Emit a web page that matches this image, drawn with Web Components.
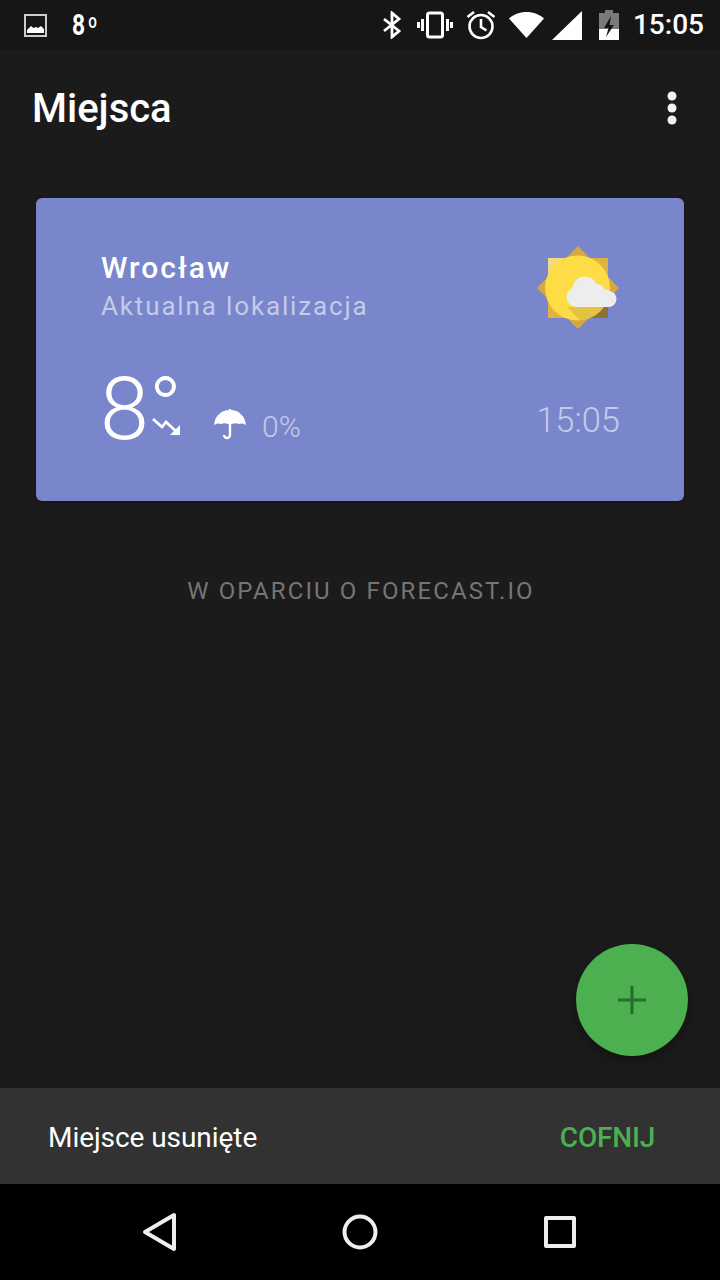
<!DOCTYPE html>
<html>

<head>
    <meta charset="utf-8">
    <title>Miejsca</title>
    <style>
        html, body { margin: 0; padding: 0; }
        body { width: 720px; height: 1280px; overflow: hidden; background: #1b1b1b; font-family: Roboto, "Liberation Sans", sans-serif; }
    </style>
</head>

<body>
    <app-screen>
        <status-bar slot="top" time="15:05"></status-bar>
        <app-toolbar slot="top">Miejsca</app-toolbar>
        <place-card city="Wrocław" note="Aktualna lokalizacja" temp="8°" rain="0%" time="15:05"></place-card>
        <credit-line>W OPARCIU O FORECAST.IO</credit-line>
        <add-fab slot="fab"></add-fab>
        <snack-bar slot="bottom" action="COFNIJ">Miejsce usunięte</snack-bar>
        <nav-bar slot="bottom"></nav-bar>
    </app-screen>
</body>
<script>
    class AppScreen extends HTMLElement {
        constructor() {
            super();
            const shadow = this.attachShadow({ mode: 'open' });
            shadow.innerHTML = `
            <style>
                :host { display: flex; flex-direction: column; position: relative; width: 720px; height: 1280px; color: #fff; }
                main { flex: 1; display: flex; flex-direction: column; padding: 32px 36px 0; }
                .fab { position: absolute; left: 576px; top: 944px; }
            </style>
            <slot name="top"></slot>
            <main><slot></slot></main>
            <div class="fab"><slot name="fab"></slot></div>
            <slot name="bottom"></slot>
            `;
        }
    }
    customElements.define('app-screen', AppScreen);

    class StatusBar extends HTMLElement {
        constructor() {
            super();
            const shadow = this.attachShadow({ mode: 'open' });
            shadow.innerHTML = `
            <style>
                :host { display: flex; align-items: center; height: 50px; background: #161616; color: #fff; box-sizing: border-box; padding: 0 16px 0 24px; }
                svg { display: block; flex: none; }
                .temp { margin-left: 25px; width: 30px; font: 700 30px/50px Roboto, sans-serif; transform: scaleX(.76); transform-origin: left center; }
                .temp sup { font-size: 20px; font-weight: 500; line-height: 0; vertical-align: 7px; margin-left: 4px; }
                .icons { margin-left: auto; display: flex; align-items: center; }
                .time { margin-left: 14px; font: 500 28px/50px Roboto, sans-serif; }
            </style>
            <svg width="23" height="23" viewBox="0 0 23 23">
                <rect x="1" y="1" width="21" height="21" fill="none" stroke="#ccc" stroke-width="2"/>
                <path d="M3 19v-3l4-4 2.500 2 2.500-1 2 1 3-2 3 3v4z" fill="#fff"/>
            </svg>
            <div class="temp">8<sup>o</sup></div>
            <div class="icons">
                <svg width="20" height="28" viewBox="0 0 20 28" fill="none" stroke="#fff" stroke-width="2.800">
                    <path d="M2 8l15 12-7 6V2l7 6L2 20"/>
                </svg>
                <svg style="margin-left:15px" width="36" height="28" viewBox="1 0 36 28" fill="none" stroke="#fff">
                    <rect x="11.500" y="2" width="15" height="24" rx="2" stroke-width="3"/>
                    <path d="M6.500 8v12M2.500 11v6M31.500 8v12M35.500 11v6" stroke-width="3"/>
                </svg>
                <svg style="margin-left:12px" width="32" height="30" viewBox="0 0 32 30" fill="none" stroke="#fff" stroke-width="2.600">
                    <circle cx="16" cy="16.500" r="11.500"/>
                    <path d="M16 9v8l5.500 3.500"/>
                    <path d="M2.500 7L9 2M29.500 7L23 2" stroke-width="2.600"/>
                </svg>
                <svg style="margin-left:11px" width="37" height="28" viewBox="0 0 37 28">
                    <path d="M18.500 27L1 7.500C5.500 3.500 11.500 1 18.500 1S31.500 3.500 36 7.500z" fill="#fff"/>
                </svg>
                <svg style="margin-left:7px" width="31" height="29" viewBox="0 0 31 29">
                    <path d="M30 0v29H0z" fill="#fff"/>
                </svg>
                <svg style="margin-left:16px" width="20" height="30" viewBox="0 0 20 30">
                    <path d="M6 0h8v3h6v27H0V3h6z" fill="#7a7a7a"/>
                    <path d="M0 19h20v11H0z" fill="#fff"/>
                    <path d="M12 6L5 18h4.500L7 27l8-12h-4.500z" fill="#161616"/>
                </svg>
            </div>
            <div class="time">${this.getAttribute('time')}</div>
            `;
        }
    }
    customElements.define('status-bar', StatusBar);

    class AppToolbar extends HTMLElement {
        constructor() {
            super();
            const shadow = this.attachShadow({ mode: 'open' });
            shadow.innerHTML = `
            <style>
                :host { display: flex; align-items: center; justify-content: space-between; box-sizing: border-box; height: 116px; padding: 2px 43px 0 32px; font: 500 40px/114px Roboto, sans-serif; color: #fff; }
                svg { display: block; margin-bottom: 2px; }
            </style>
            <slot></slot>
            <svg width="10" height="34" viewBox="0 0 10 34" fill="#f2f2f2">
                <circle cx="5" cy="5" r="4.500"/>
                <circle cx="5" cy="17" r="4.500"/>
                <circle cx="5" cy="29" r="4.500"/>
            </svg>
            `;
        }
    }
    customElements.define('app-toolbar', AppToolbar);

    class WeatherIcon extends HTMLElement {
        constructor() {
            super();
            const shadow = this.attachShadow({ mode: 'open' });
            shadow.innerHTML = `
            <style>
                :host { display: block; width: 90px; height: 90px; }
                svg { display: block; }
            </style>
            <svg width="90" height="90" viewBox="534 243 90 90">
                <clipPath id="disc"><circle cx="577.500" cy="288" r="32.500"/></clipPath>
                <path d="M578 246l41 42-41 41-41-41z" fill="#d8a83c"/>
                <rect x="548" y="258" width="60" height="60" fill="#e1b23f"/>
                <path d="M548 258h30l-30 30z" fill="#f2dc80"/>
                <path d="M608 318h-30l30-30z" fill="#8b7238"/>
                <circle cx="577.500" cy="288" r="32.500" fill="#fddc45"/>
                <path d="M567 307h50v23h-27z" fill="#e2c23e" clip-path="url(#disc)"/>
                <g fill="#ededed">
                    <circle cx="576.500" cy="297" r="10"/>
                    <circle cx="585" cy="289" r="12.500"/>
                    <circle cx="597" cy="292" r="8"/>
                    <circle cx="608.500" cy="299" r="8"/>
                    <rect x="576" y="290" width="33" height="17"/>
                </g>
            </svg>
            `;
        }
    }
    customElements.define('weather-icon', WeatherIcon);

    class PlaceCard extends HTMLElement {
        constructor() {
            super();
            const shadow = this.attachShadow({ mode: 'open' });
            shadow.innerHTML = `
            <style>
                :host { display: flex; flex-direction: column; justify-content: space-between; box-sizing: border-box; height: 303px; padding: 50px 64px 61px 65px; background: #7986cb; border-radius: 6px; color: #fff; box-shadow: 0 1px 3px rgba(0,0,0,.35); }
                .row { display: flex; justify-content: space-between; }
                .top { align-items: flex-start; height: 88px; }
                .bottom { align-items: flex-end; }
                .city { font: 500 30px/39px Roboto, sans-serif; letter-spacing: 2px; }
                .note { font: 400 26px/38px Roboto, sans-serif; letter-spacing: 1.850px; color: #c4cae8; }
                .now { display: flex; align-items: flex-end; }
                .temp { font: 300 88px/76px Roboto, sans-serif; margin: 0 0 -7px -1px; }
                .trend { display: block; margin: 0 0 5px -30px; }
                .brolly { display: block; margin: 0 0 0 34px; }
                .rain { font: 300 30px/36px Roboto, sans-serif; color: #c4cae8; margin: 0 0 -5px 16px; }
                .time { font: 300 34.500px/40px Roboto, sans-serif; color: #c4cae8; margin-bottom: 0; }
                weather-icon { margin: -5px -4px 0 0; }
            </style>
            <div class="row top">
                <div>
                    <div class="city">${this.getAttribute('city')}</div>
                    <div class="note">${this.getAttribute('note')}</div>
                </div>
                <weather-icon></weather-icon>
            </div>
            <div class="row bottom">
                <div class="now">
                    <div class="temp">${this.getAttribute('temp')}</div>
                    <svg class="trend" width="28" height="18" viewBox="0 0 28 18" fill="none" stroke="#fff" stroke-width="2.800">
                        <path d="M1 2l9 8 4-5 12 11"/>
                        <path d="M28 8v10H18z" fill="#fff" stroke="none"/>
                    </svg>
                    <svg class="brolly" width="32" height="31" viewBox="0 0 32 31">
                        <path d="M15 0h2v2h-2z" fill="#fff"/>
                        <path d="M16 1c9 0 15 6 16 15c-2-1.500-5-2-7-1c-2-1-5-1-7 0h-4c-2-1-5-1-7 0c-2-1-5-.5-7 1C1 7 7 1 16 1z" fill="#fff"/>
                        <path d="M16 13v13a3 3 0 0 1-6 0" fill="none" stroke="#fff" stroke-width="2.400"/>
                    </svg>
                    <div class="rain">${this.getAttribute('rain')}</div>
                </div>
                <div class="time">${this.getAttribute('time')}</div>
            </div>
            `;
        }
    }
    customElements.define('place-card', PlaceCard);

    class CreditLine extends HTMLElement {
        constructor() {
            super();
            const shadow = this.attachShadow({ mode: 'open' });
            shadow.innerHTML = `
            <style>
                :host { display: block; margin-top: 72px; padding-left: 2px; text-align: center; font: 400 24px/36px Roboto, sans-serif; letter-spacing: 2.120px; color: #757575; }
            </style>
            <slot></slot>
            `;
        }
    }
    customElements.define('credit-line', CreditLine);

    class AddFab extends HTMLElement {
        constructor() {
            super();
            const shadow = this.attachShadow({ mode: 'open' });
            shadow.innerHTML = `
            <style>
                :host { display: flex; align-items: center; justify-content: center; width: 112px; height: 112px; border-radius: 50%; background: #4caf50; box-shadow: 0 6px 14px rgba(0,0,0,.3); }
                svg { display: block; }
            </style>
            <svg width="28" height="28" viewBox="0 0 28 28" stroke="#2a6e2d" stroke-width="3.200">
                <path d="M14 0v28M0 14h28"/>
            </svg>
            `;
        }
    }
    customElements.define('add-fab', AddFab);

    class SnackBar extends HTMLElement {
        constructor() {
            super();
            const shadow = this.attachShadow({ mode: 'open' });
            shadow.innerHTML = `
            <style>
                :host { display: flex; align-items: center; justify-content: space-between; box-sizing: border-box; height: 96px; padding: 4px 65px 0 48px; background: #323232; color: #fff; font: 400 28px/40px Roboto, sans-serif; letter-spacing: -.06px; }
                button { all: unset; font: 500 28px/40px Roboto, sans-serif; letter-spacing: -.2px; color: #4caf50; }
            </style>
            <slot></slot>
            <button>${this.getAttribute('action')}</button>
            `;
        }
    }
    customElements.define('snack-bar', SnackBar);

    class NavBar extends HTMLElement {
        constructor() {
            super();
            const shadow = this.attachShadow({ mode: 'open' });
            shadow.innerHTML = `
            <style>
                :host { display: grid; grid-template-columns: 200px 200px 200px; justify-content: center; justify-items: center; align-items: center; height: 96px; background: #000; }
                svg { display: block; }
            </style>
            <svg width="40" height="40" viewBox="0 0 40 40" fill="none" stroke="#eee" stroke-width="4" stroke-linejoin="round">
                <path d="M5 20L34 3v34z"/>
            </svg>
            <svg width="40" height="40" viewBox="0 0 40 40" fill="none" stroke="#eee" stroke-width="4">
                <circle cx="20" cy="20" r="15.500"/>
            </svg>
            <svg width="40" height="40" viewBox="0 0 40 40" fill="none" stroke="#eee" stroke-width="4" stroke-linejoin="round">
                <rect x="6" y="6" width="28" height="28"/>
            </svg>
            `;
        }
    }
    customElements.define('nav-bar', NavBar);
</script>

</html>
